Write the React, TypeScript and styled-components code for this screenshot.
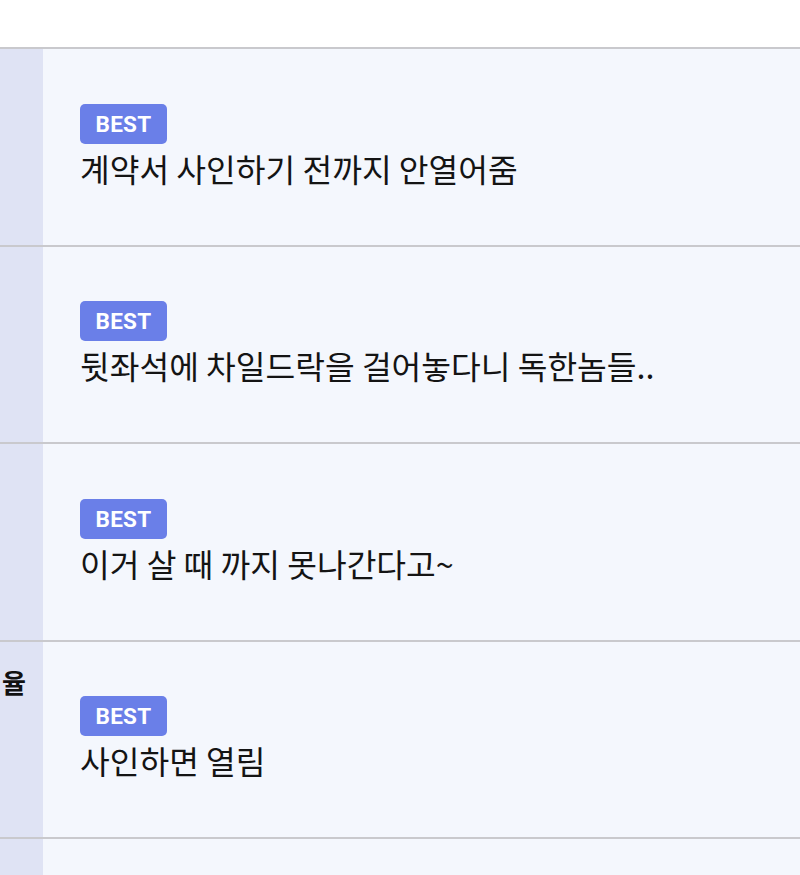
import React from "react";
import styled, { createGlobalStyle } from "styled-components";

const Global = createGlobalStyle`
  html, body { margin: 0; padding: 0; background: #ffffff; }
  body { font-family: Roboto, "Noto Sans CJK KR", sans-serif; overflow: hidden; }
`;

const Page = styled.div`
  width: 800px;
  height: 875px;
  overflow: hidden;
  background: #ffffff;
`;

const TopBar = styled.div`
  height: 47px;
  background: #ffffff;
  border-bottom: 2px solid #c9c9cd;
`;

const List = styled.div`
  display: flex;
  flex-direction: column;
`;

const Row = styled.div`
  display: grid;
  grid-template-columns: 43px 1fr;
  height: 195.5px;
  border-bottom: 2px solid #c9c9cd;
`;

const Side = styled.div<{ $offset: number }>`
  background: #dfe3f4;
  overflow: hidden;
  display: flex;
  justify-content: flex-end;
  align-items: flex-start;
  padding-top: ${(p) => p.$offset}px;
  padding-right: 17px;
  box-sizing: border-box;
  white-space: nowrap;
  font-family: "Noto Sans CJK KR", sans-serif;
  font-weight: 700;
  font-size: 26px;
  line-height: 32px;
  color: #111111;
`;

const Body = styled.div`
  background: #f4f7fd;
  display: flex;
  flex-direction: column;
  justify-content: center;
  align-items: flex-start;
  padding-left: 37px;
`;

const Badge = styled.span`
  display: inline-flex;
  align-items: center;
  justify-content: center;
  height: 40px;
  width: 87px;
  box-sizing: border-box;
  border-radius: 5px;
  background: #6a7fe8;
  color: #ffffff;
  font-family: Roboto, sans-serif;
  font-weight: 700;
  font-size: 22.5px;
  letter-spacing: 0.3px;
`;

const Title = styled.div`
  margin-top: 2px;
  font-family: "Noto Sans CJK KR", sans-serif;
  font-size: 32.3px;
  line-height: 44px;
  color: #141414;
  white-space: nowrap;
`;

const items = [
  { title: "계약서 사인하기 전까지 안열어줌", side: "", offset: 0 },
  { title: "뒷좌석에 차일드락을 걸어놓다니 독한놈들..", side: "", offset: 0 },
  { title: "이거 살 때 까지 못나간다고~", side: "", offset: 0 },
  { title: "사인하면 열림", side: "율", offset: 24 },
];

export default function App() {
  return (
    <Page>
      <Global />
      <TopBar />
      <List>
        {items.map((it, i) => (
          <Row key={i}>
            <Side $offset={it.offset}>{it.side}</Side>
            <Body>
              <Badge>BEST</Badge>
              <Title>{it.title}</Title>
            </Body>
          </Row>
        ))}
        <Row>
          <Side $offset={0} />
          <Body />
        </Row>
      </List>
    </Page>
  );
}
